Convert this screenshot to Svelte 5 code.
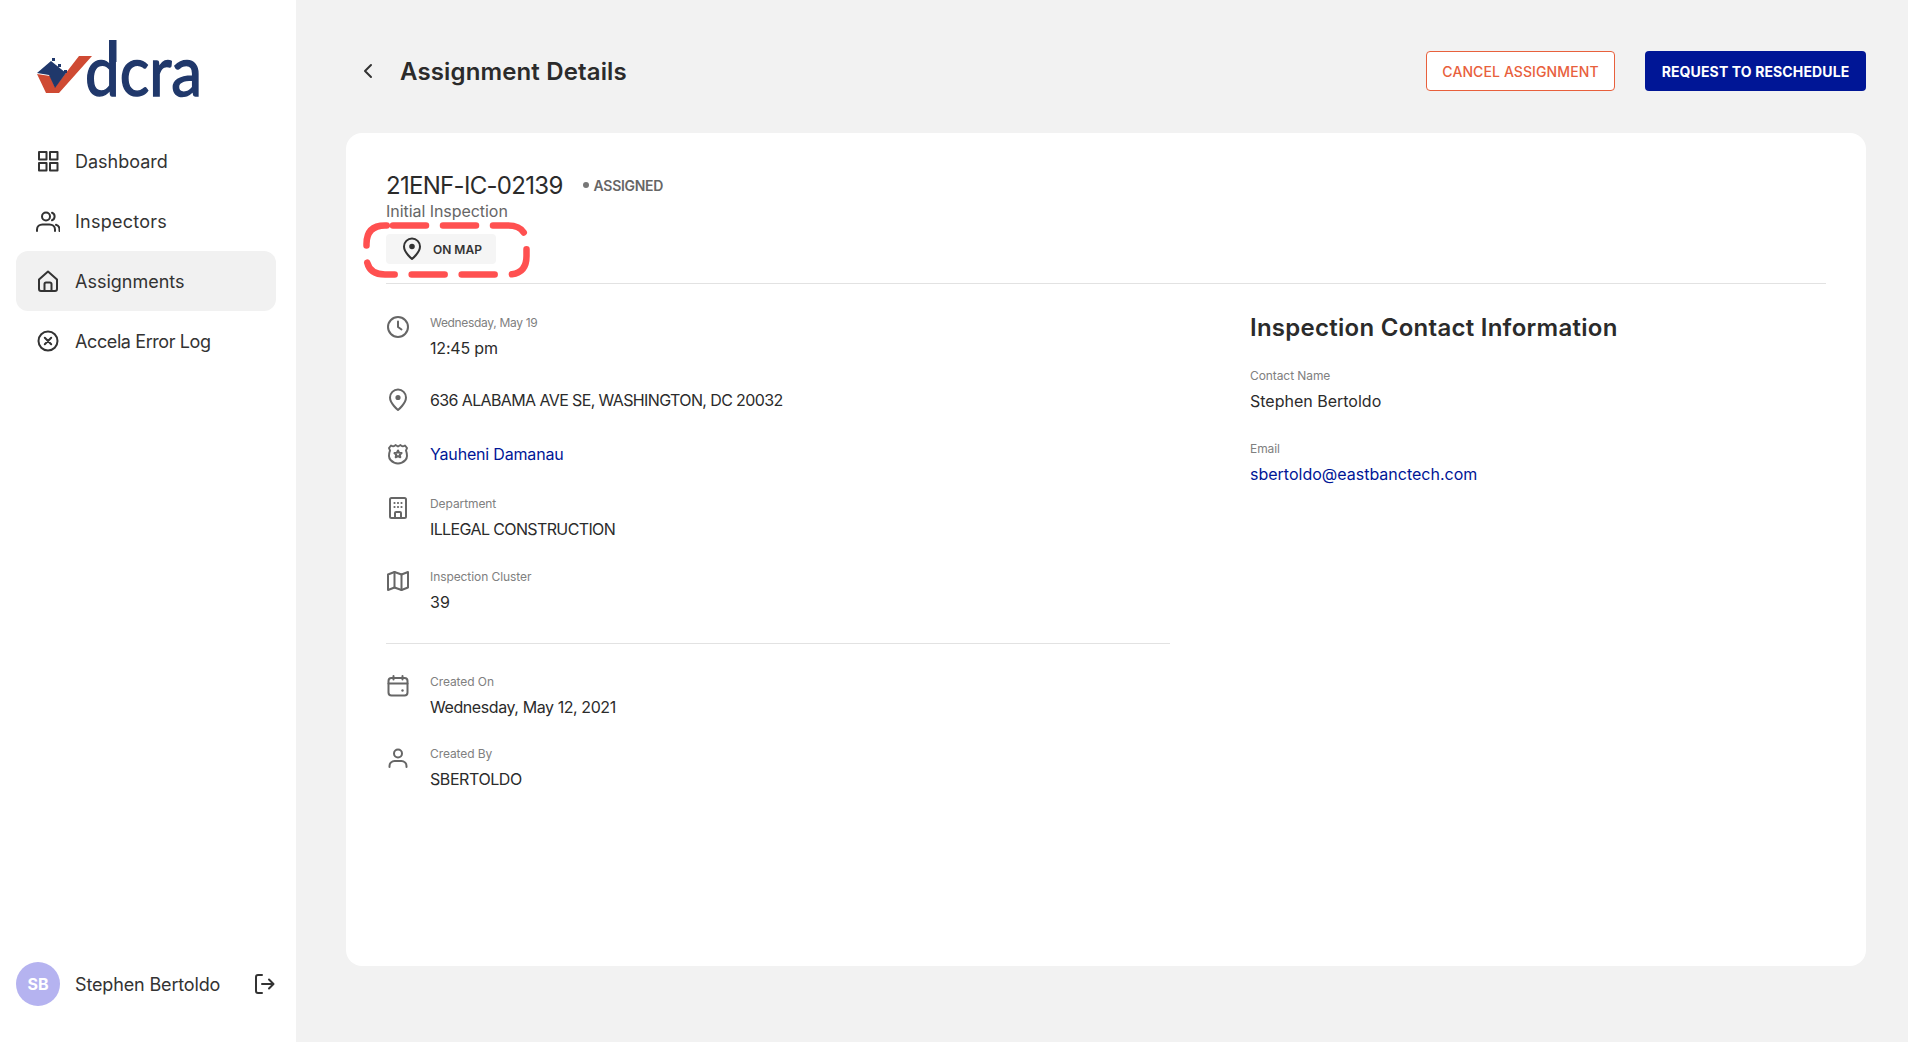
<script>
  const nav = [
    { label: 'Dashboard', icon: 'grid' },
    { label: 'Inspectors', icon: 'users', cls: 'wide' },
    { label: 'Assignments', icon: 'home', active: true },
    { label: 'Accela Error Log', icon: 'x', cls: 'tight' }
  ];
  const rowsA = [
    { icon: 'clock', label: 'Wednesday, May 19', value: '12:45 pm', lcls: 'tight', cls: 'snug' },
    { icon: 'pin', value: '636 ALABAMA AVE SE, WASHINGTON, DC 20032', gap: 28, cls: 'caps' },
    { icon: 'badge', value: 'Yauheni Damanau', link: true, gap: 30, cls: 'snug' },
    { icon: 'building', label: 'Department', value: 'ILLEGAL CONSTRUCTION', gap: 28, cls: 'caps' },
    { icon: 'map', label: 'Inspection Cluster', value: '39', gap: 26 }
  ];
  const rowsB = [
    { icon: 'calendar', label: 'Created On', value: 'Wednesday, May 12, 2021', cls: 'tight' },
    { icon: 'user', label: 'Created By', value: 'SBERTOLDO', gap: 25, cls: 'tight' }
  ];
</script>

{#snippet icon(name)}
  <svg class="ic" viewBox="0 0 24 24" fill="none" stroke="currentColor" stroke-width="2" stroke-linecap="round" stroke-linejoin="round">
    {#if name === 'grid'}
      <rect x="3" y="3" width="7.500" height="7.500" /><rect x="14" y="3" width="7.500" height="7.500" /><rect x="3" y="14" width="7.500" height="7.500" /><rect x="14" y="14" width="7.500" height="7.500" />
    {:else if name === 'users'}
      <circle cx="10" cy="7.500" r="4" /><path d="M1 22v-1.500C1 17.500 3.500 15.500 6.500 15.500h7c3 0 5.500 2 5.500 5V22" /><path d="M16 3.800a4 4 0 0 1 0 7.500" /><path d="M20 15.800c2 .6 3.500 2.400 3.500 4.700V22" />
    {:else if name === 'home'}
      <path d="M3 10.500 12 2.500l9 8V20a2 2 0 0 1-2 2H5a2 2 0 0 1-2-2z" /><path d="M8.500 22v-7a1.500 1.500 0 0 1 1.500-1.500h4a1.500 1.500 0 0 1 1.500 1.500v7" />
    {:else if name === 'x'}
      <circle cx="12" cy="12" r="9.500" /><path d="m8.800 8.800 6.400 6.400M15.200 8.800l-6.400 6.400" />
    {:else if name === 'clock'}
      <circle cx="12" cy="12" r="10" /><path d="M12 6.500V12l3.500 2.500" />
    {:else if name === 'pin'}
      <path d="M12 22s-8-6.500-8-12.500a8 8 0 0 1 16 0C20 15.500 12 22 12 22z" /><circle cx="12" cy="9.500" r="1.600" fill="currentColor" />
    {:else if name === 'badge'}
      <path d="M5 3.500c1.500 1 3.500.8 4.500-.5L12 4.500 14.500 3c1 1.300 3 1.500 4.500.5l2 2.500-1 2.500c1.500 4 1.500 7-.5 9.500-2 2-4.500 3.500-7.500 3.500s-5.500-1.500-7.500-3.500c-2-2.500-2-5.500-.5-9.500L3 6z" /><path d="M12 8.500l1.100 2.300 2.500.3-1.800 1.700.5 2.500-2.300-1.200-2.300 1.200.5-2.500-1.800-1.700 2.500-.3z" />
    {:else if name === 'building'}
      <rect x="4" y="2" width="16" height="20" rx="1.500" /><path d="M9 22v-5a1 1 0 0 1 1-1h4a1 1 0 0 1 1 1v5" /><path d="M8.500 7h.01M12 7h.01M15.500 7h.01M8.500 11h.01M12 11h.01M15.500 11h.01" stroke-width="2.200" />
    {:else if name === 'map'}
      <path d="M2 5.500 8.500 3l7 2.500L22 3v15.500L15.500 21l-7-2.500L2 21z" /><path d="M8.500 3v15.500M15.500 5.500V21" />
    {:else if name === 'calendar'}
      <rect x="2.500" y="4" width="19" height="17.500" rx="3" /><path d="M2.500 9.500h19M7.500 2v3.500M16.500 2v3.500" /><path d="M16.500 16.500h.01" stroke-width="2.400" />
    {:else if name === 'user'}
      <circle cx="12" cy="7.500" r="4" /><path d="M3.500 21v-1c0-3 2.500-5 5-5h7c2.500 0 5 2 5 5v1" />
    {:else if name === 'logout'}
      <path d="M10 3H6a2 2 0 0 0-2 2v14a2 2 0 0 0 2 2h4" /><path d="M10 12h11M17 7.500l4.500 4.500-4.500 4.500" />
    {/if}
  </svg>
{/snippet}

{#snippet infoRow(r)}
  <div class="row" style:margin-top={r.gap ? `${r.gap}px` : null}>
    <span class="row-ic" class:plain={!r.label}>{@render icon(r.icon)}</span>
    <div>
      {#if r.label}<div class="lbl {r.lcls ?? ''}">{r.label}</div>{/if}
      <div class="val {r.cls ?? ''}" class:link={r.link}>{r.value}</div>
    </div>
  </div>
{/snippet}

<div class="page">
  <aside class="side">
    <div class="logo">
      <svg width="190" height="90" viewBox="30 20 190 90">
        <text x="85" y="96" class="logotext" textLength="117" lengthAdjust="spacingAndGlyphs">dcra</text>
        <rect x="109" y="40" width="7.500" height="22" fill="#20386b" />
        <polygon points="37,74 46,93 59,93 92,56 79,56 55,87 50,76" fill="#cf4a33" />
        <polygon points="37,73 51,61 66,73 55,88 49,75" fill="#20386b" />
        <rect x="52" y="58" width="3" height="3" fill="#20386b" />
        <rect x="58" y="64" width="3" height="3" fill="#20386b" />
        <rect x="64" y="70" width="3" height="3" fill="#20386b" />
      </svg>
    </div>
    <nav>
      {#each nav as n}
        <div class="nav {n.cls ?? ''}" class:active={n.active}>
          {@render icon(n.icon)}
          <span>{n.label}</span>
        </div>
      {/each}
    </nav>
    <div class="user">
      <span class="avatar">SB</span>
      <span class="uname">Stephen Bertoldo</span>
      {@render icon('logout')}
    </div>
  </aside>

  <main class="main">
    <header class="top">
      <svg class="back" viewBox="0 0 10 16" fill="none" stroke="#333" stroke-width="2" stroke-linecap="round" stroke-linejoin="round"><path d="M8 2 2 8l6 6" /></svg>
      <h1>Assignment Details</h1>
      <button class="btn outline">CANCEL ASSIGNMENT</button>
      <button class="btn solid">REQUEST TO RESCHEDULE</button>
    </header>

    <section class="card">
      <div class="head">
        <div class="idline">
          <span class="id">21ENF-IC-02139</span>
          <span class="status"><i></i>ASSIGNED</span>
        </div>
        <div class="sub">Initial Inspection</div>
        <button class="map"><svg viewBox="0 0 24 24" fill="none" stroke="#333" stroke-width="2" stroke-linecap="round" stroke-linejoin="round"><path d="M12 22s-8-6.500-8-12.500a8 8 0 0 1 16 0C20 15.500 12 22 12 22z" /><circle cx="12" cy="9.500" r="1.800" fill="#333" /></svg>ON MAP</button>
        <svg class="mark" width="170" height="60" viewBox="0 0 170 60" fill="none">
          <path d="M30 3.500H145Q163.500 3.500 163.500 22V34Q163.500 52.500 145 52.500H22Q3.500 52.500 3.500 34V22Q3.500 3.500 22 3.500H30" stroke="#ff5050" stroke-width="6.500" stroke-linecap="round" stroke-dasharray="33 17" />
        </svg>
      </div>

      <div class="cols">
        <div class="left">
          <div class="group first">
            {#each rowsA as r}{@render infoRow(r)}{/each}
          </div>
          <div class="group second">
            {#each rowsB as r}{@render infoRow(r)}{/each}
          </div>
        </div>
        <div class="right">
          <h2>Inspection Contact Information</h2>
          <div class="lbl c1">Contact Name</div>
          <div class="val">Stephen Bertoldo</div>
          <div class="lbl c2">Email</div>
          <div class="val link">sbertoldo@eastbanctech.com</div>
        </div>
      </div>
    </section>
  </main>
</div>

<style>
  :global(body) { margin: 0; background: #f2f2f2; font-family: Inter, "Noto Sans", sans-serif; color: #2b2b2b; }
  .page { display: flex; height: 1042px; overflow: hidden; }
  .side { width: 296px; background: #fff; display: flex; flex-direction: column; padding: 0 20px 0 16px; box-sizing: border-box; flex: none; }
  .logo { height: 131px; padding: 20px 0 0 14px; box-sizing: border-box; }
  .logo svg { display: block; }
  .logotext { font-family: Lato, sans-serif; font-size: 70px; fill: #20386b; stroke: #20386b; stroke-width: 1.500px; }
  .ic { width: 24px; height: 24px; flex: none; display: block; }
  .nav { display: flex; align-items: center; gap: 15px; height: 60px; padding: 0 0 0 20px; border-radius: 12px; font-size: 18px; color: #333; }
  .nav.active { background: #f1f1f1; }
  .nav.wide { letter-spacing: 0.25px; }
  .nav.tight { letter-spacing: -0.4px; }
  .user { margin-top: auto; height: 44px; margin-bottom: 36px; display: flex; align-items: center; color: #333; }
  .avatar { width: 44px; height: 44px; border-radius: 50%; background: #b5b3f0; color: #fff; font-weight: 700; font-size: 16px; display: flex; align-items: center; justify-content: center; }
  .uname { font-size: 18px; margin-left: 15px; flex: 1; letter-spacing: -0.15px; }
  .main { flex: 1; padding: 0 42px 0 50px; min-width: 0; }
  .top { display: flex; align-items: center; height: 133px; padding-top: 9px; box-sizing: border-box; }
  .back { width: 10px; height: 16px; margin-left: 17px; flex: none; }
  h1 { margin: 0 0 0 27px; font-size: 24px; font-weight: 600; color: #2b2b2b; flex: 1; letter-spacing: 0.14px; }
  .btn { height: 40px; font: 500 14px Inter, sans-serif; border-radius: 4px; box-sizing: border-box; padding: 0; }
  .outline { width: 189px; background: #fff; border: 1px solid #e8603c; color: #e8603c; letter-spacing: 0.1px; }
  .solid { width: 221px; margin-left: 30px; background: #001696; border: 0; color: #fff; font-weight: 700; letter-spacing: 0.12px; }
  .card { background: #fff; border-radius: 16px; height: 833px; padding: 0 40px; box-sizing: border-box; }
  .head { position: relative; height: 151px; border-bottom: 1px solid #e2e2e2; padding-top: 37px; box-sizing: border-box; }
  .idline { display: flex; align-items: center; gap: 20px; height: 30px; }
  .id { font-size: 24px; color: #2b2b2b; letter-spacing: -0.7px; }
  .status { font-size: 14px; font-weight: 600; color: #666; display: flex; align-items: center; letter-spacing: -0.3px; }
  .status i { width: 6px; height: 6px; border-radius: 50%; background: #777; margin-right: 5px; }
  .sub { font-size: 16px; line-height: 22px; color: #666; margin-top: 0; letter-spacing: -0.05px; }
  .map { display: flex; align-items: center; width: 110px; height: 30px; margin-top: 12px; padding: 0 0 0 14px; border: 0; border-radius: 4px; background: #f5f5f5; font: 600 12px Inter, sans-serif; color: #333; box-sizing: border-box; }
  .map svg { width: 24px; height: 24px; margin-right: 9px; }
  .mark { position: absolute; left: -23px; top: 89px; }
  .cols { display: flex; }
  .left { width: 784px; }
  .group.first { padding: 29px 0 29px; border-bottom: 1px solid #e2e2e2; }
  .group.second { padding-top: 28px; }
  .row { display: flex; }
  .row-ic { width: 44px; color: #666; flex: none; padding-top: 2px; }
  .row-ic.plain { padding-top: 0; }
  .lbl { font-size: 12px; line-height: 20px; color: #808080; letter-spacing: -0.08px; }
  .lbl.tight { letter-spacing: -0.32px; }
  .val { font-size: 16px; line-height: 24px; margin-top: 3px; color: #2b2b2b; }
  .val.caps { letter-spacing: -0.62px; }
  .val.tight { letter-spacing: -0.42px; }
  .val.snug { letter-spacing: -0.18px; }
  .plain + div .val { margin-top: 0; }
  .link { color: #001696; }
  .right { margin-left: 80px; padding-top: 28px; }
  h2 { margin: 0; font-size: 24px; font-weight: 600; line-height: 32px; color: #2b2b2b; letter-spacing: 0.27px; }
  .c1 { margin-top: 22px; }
  .c2 { margin-top: 26px; }
</style>
